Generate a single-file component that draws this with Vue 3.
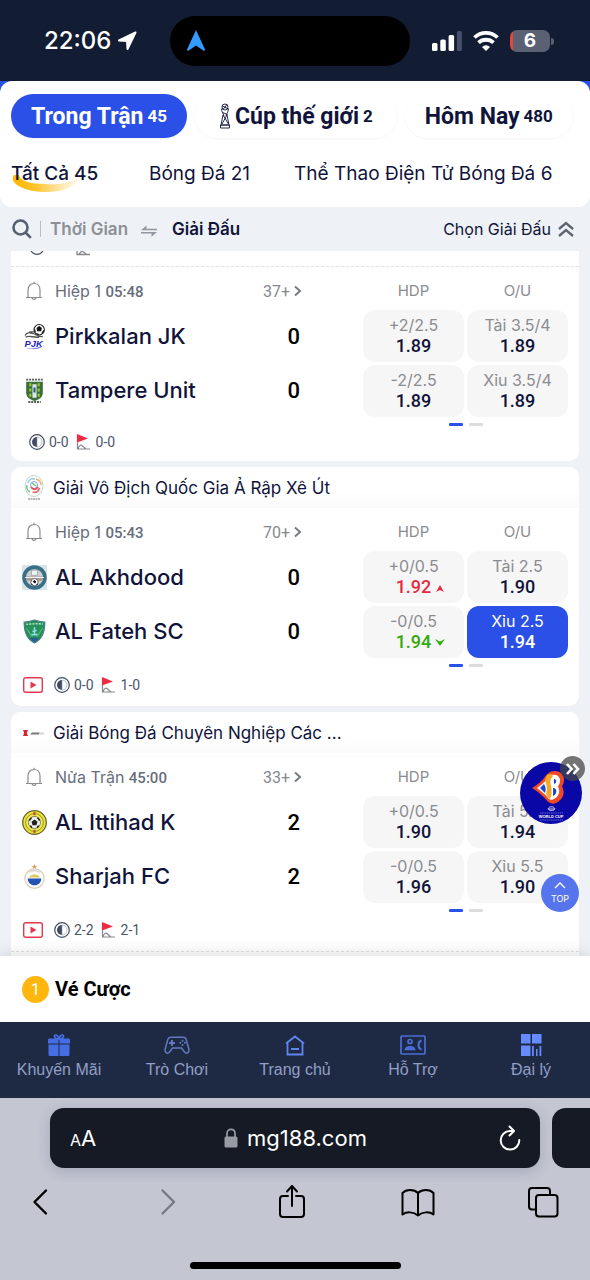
<script setup>
import { ref } from 'vue'

const dayTabs = [
  { label: 'Trong Trận', count: 45 },
  { label: 'Cúp thế giới', count: 2, cup: true },
  { label: 'Hôm Nay', count: 480 },
]
const activeDay = ref(0)

const sports = ['Tất Cả 45', 'Bóng Đá 21', 'Thể Thao Điện Tử Bóng Đá 6']
const activeSport = ref(0)

const picked = ref('1-3')

const cards = [
  {
    carry: true,
    period: 'Hiệp 1', clock: '05:48', more: '37+',
    teams: [
      { name: 'Pirkkalan JK', score: 0, logo: 'pjk' },
      { name: 'Tampere Unit', score: 0, logo: 'tampere' },
    ],
    odds: [
      { line: '+2/2.5', price: '1.89' },
      { line: 'Tài 3.5/4', price: '1.89' },
      { line: '-2/2.5', price: '1.89' },
      { line: 'Xỉu 3.5/4', price: '1.89' },
    ],
    half: '0-0', corners: '0-0',
  },
  {
    league: 'Giải Vô Địch Quốc Gia Ả Rập Xê Út', leagueLogo: 'saudi',
    period: 'Hiệp 1', clock: '05:43', more: '70+', video: true,
    teams: [
      { name: 'AL Akhdood', score: 0, logo: 'akhdood' },
      { name: 'AL Fateh SC', score: 0, logo: 'fateh' },
    ],
    odds: [
      { line: '+0/0.5', price: '1.92', move: 'up' },
      { line: 'Tài 2.5', price: '1.90' },
      { line: '-0/0.5', price: '1.94', move: 'down' },
      { line: 'Xỉu 2.5', price: '1.94' },
    ],
    half: '0-0', corners: '1-0',
  },
  {
    league: 'Giải Bóng Đá Chuyên Nghiệp Các ...', leagueLogo: 'adnoc',
    period: 'Nửa Trận', clock: '45:00', more: '33+', video: true, hasNext: true,
    teams: [
      { name: 'AL Ittihad K', score: 2, logo: 'ittihad' },
      { name: 'Sharjah FC', score: 2, logo: 'sharjah' },
    ],
    odds: [
      { line: '+0/0.5', price: '1.90' },
      { line: 'Tài 5.5', price: '1.94' },
      { line: '-0/0.5', price: '1.96' },
      { line: 'Xỉu 5.5', price: '1.90' },
    ],
    half: '2-2', corners: '2-1',
  },
]

const nav = [
  { label: 'Khuyến Mãi', icon: 'gift' },
  { label: 'Trò Chơi', icon: 'pad' },
  { label: 'Trang chủ', icon: 'home' },
  { label: 'Hỗ Trợ', icon: 'support' },
  { label: 'Đại lý', icon: 'agent' },
]
</script>

<template>
  <div class="screen">
    <header class="status">
      <div class="clock">
        <span>22:06</span>
        <svg width="20" height="20" viewBox="0 0 20 20"><path d="M18.500 1.500 2 9.500l8 .5.500 8Z" fill="#fff" stroke="#fff" stroke-width="2" stroke-linejoin="round" /></svg>
      </div>
      <div class="island">
        <svg width="18" height="22" viewBox="0 0 18 22"><path d="M9 0 18 19.500c.4 1-.6 1.700-1.400 1.200L9 15.500 1.400 20.700C.6 21.200-.4 20.500 0 19.500Z" fill="#339bff" /></svg>
      </div>
      <div class="signals">
        <svg width="30" height="22" viewBox="0 0 30 22">
          <rect x="0" y="13" width="5.500" height="8" rx="1.500" fill="#fff" />
          <rect x="8.300" y="9.500" width="5.500" height="11.500" rx="1.500" fill="#fff" />
          <rect x="16.600" y="5" width="5.500" height="16" rx="1.500" fill="#fff" />
          <rect x="24.900" y="1" width="5" height="20" rx="1.500" fill="#46506a" />
        </svg>
        <svg width="26" height="22" viewBox="0 0 26 22" fill="none" stroke="#fff" stroke-width="3.800">
          <path d="M1.500 7.500a16.500 16.500 0 0 1 23 0" />
          <path d="M5.500 12.700a11 11 0 0 1 15 0" />
          <path d="M13 21 9 17a5.600 5.600 0 0 1 8 0Z" fill="#fff" stroke="none" />
        </svg>
        <div class="battery">6</div>
      </div>
    </header>

    <div class="top-wrap">
      <section class="top-panel">
        <nav class="days">
          <button
            v-for="(t, i) in dayTabs"
            :key="t.label"
            type="button"
            :class="['day', { active: activeDay === i, special: t.cup }]"
            @click="activeDay = i"
          >
            <svg v-if="t.cup" class="cup" width="12" height="26" viewBox="0 0 12 26" fill="none" stroke="#10143a" stroke-width=".9">
              <circle cx="6" cy="4" r="3" /><path d="M3 2.500 9 6M8 1.500 4 6.500" />
              <path d="M2.500 5.500c0 3 1.500 4.500 2.500 7.500M9.500 5.500c0 3-1.500 4.500-2.500 7.500M3.500 9.500l5 2M4 12l-2 10h8L8 12M4 12l5.500 9M8 12 3 21" />
              <path d="M1.500 22h9v3h-9Z" />
            </svg>
            <span class="day-label">{{ t.label }}</span>
            <span class="day-count">{{ t.count }}</span>
          </button>
        </nav>
        <nav class="sports">
          <button
            v-for="(s, i) in sports"
            :key="s"
            type="button"
            :class="['sport', { active: activeSport === i }]"
            @click="activeSport = i"
          >
            <svg v-if="activeSport === i" class="swoosh" width="68" height="17" viewBox="0 0 68 17">
              <defs><linearGradient id="swooshFill"><stop offset="0" stop-color="#ffb800" /><stop offset=".35" stop-color="#ffc42e" /><stop offset="1" stop-color="#fff3d0" stop-opacity=".5" /></linearGradient></defs>
              <path d="M2 0C-4 8 12 17 34 17 52 17 64 11 68 2 58 8 46 10 34 9 18 9 8 6 7 0Z" fill="url(#swooshFill)" />
            </svg>
            <span>{{ s }}</span>
          </button>
        </nav>
      </section>
    </div>

    <section class="filters">
      <button type="button" class="plain" aria-label="Tìm kiếm">
        <svg width="20" height="20" viewBox="0 0 20 20" fill="none" stroke="#565f73" stroke-width="2.600"><circle cx="8.500" cy="8.500" r="7" /><path d="m13.500 13.500 5.300 5.300" /></svg>
      </button>
      <span class="divider"></span>
      <button type="button" class="plain sort muted">Thời Gian</button>
      <svg class="swap" width="18" height="12" viewBox="0 0 18 12" fill="#9497a0"><path d="M17 3.800V5.300H1L6.500.500v3.300ZM1 7h16l-5.500 4.800V8.500H1Z" /></svg>
      <button type="button" class="plain sort">Giải Đấu</button>
      <button type="button" class="plain choose">
        <span>Chọn Giải Đấu</span>
        <svg width="16" height="16" viewBox="0 0 16 16" fill="none" stroke="#5f6570" stroke-width="2.400"><path d="m1 8 7-6 7 6M1 15l7-6 7 6" /></svg>
      </button>
    </section>

    <main class="list">
      <article v-for="(m, ci) in cards" :key="ci" :class="['card', { carry: m.carry }]">
        <div v-if="m.carry" class="previous">
          <svg width="16" height="6" viewBox="0 0 16 6" fill="none" stroke="#4c566c" stroke-width="1.300"><path d="M2 0c3 4.500 9 4.500 12 0" /></svg>
          <svg width="16" height="6" viewBox="0 0 16 6" fill="none" stroke="#85898f" stroke-width="1.300"><path d="M2 0v3.500h13M4 3l3-3 4 3" /></svg>
        </div>
        <h2 v-else class="league">
          <svg v-if="m.leagueLogo === 'saudi'" width="22" height="26" viewBox="0 0 22 26" fill="none">
            <ellipse cx="11" cy="11" rx="9" ry="10.500" stroke="#b9c8bd" stroke-width=".8" />
            <path d="M5 8c1-4 4-5 7-4" stroke="#8fd0ee" stroke-width="1.600" />
            <path d="M13 4c3 1 5 3 5 6" stroke="#f2b36c" stroke-width="1.600" />
            <path d="M4 10c-1 4 1 6 3 7" stroke="#78cc88" stroke-width="1.600" />
            <path d="M16.500 13c-1 4-4 5-7 4" stroke="#e86a74" stroke-width="1.800" />
            <circle cx="11" cy="10" r="3.500" stroke="#7ba2dd" stroke-width="1" /><path d="M8 12c2 3 5 3 7 0" stroke="#e24e5a" stroke-width="1.800" /><path d="m9 8 4 3" stroke="#63bd73" stroke-width="1.200" />
            <path d="M5 24h12" stroke="#777" stroke-width="1.200" stroke-dasharray="2 .5" />
          </svg>
          <svg v-else width="22" height="26" viewBox="0 0 22 26">
            <path d="M0 10h5L3.800 13 5 16H0l1.200-3Z" fill="#d9232e" /><path d="M7 14.500 9 12.500h8l-1 2Z" fill="#77797c" /><path d="M16 12.500h5v2h-5" fill="#d5d6d8" />
          </svg>
          <span>{{ m.league }}</span>
        </h2>

        <div class="match">
          <div class="info">
            <div class="meta">
              <button type="button" class="plain bell" aria-label="Thông báo">
                <svg width="18" height="20" viewBox="0 0 18 20" fill="none" stroke="#8c8c90" stroke-width="1.200"><path d="M1 16.500h16M3 16V9c0-4 2.500-6.500 6-6.500S15 5 15 9v7M9 .700v2M7 17c.5 1.800 3.500 1.800 4 0" /></svg>
              </button>
              <span class="period">{{ m.period }} <b>{{ m.clock }}</b></span>
              <a href="#" class="more">{{ m.more }}
                <svg width="8" height="12" viewBox="0 0 8 12" fill="none" stroke="#777b84" stroke-width="2"><path d="m1 1.500 5 4.500-5 4.500" /></svg>
              </a>
            </div>
            <div v-for="t in m.teams" :key="t.name" class="team">
              <svg v-if="t.logo === 'pjk'" class="crest" viewBox="0 0 24 24">
                <circle cx="16.500" cy="5.500" r="5" fill="#fff" stroke="#222" stroke-width="1" /><path d="m14.500 4 2-1.500 2 1.500-.5 2.500h-3ZM12 5l1 3M21 6l-2 3M14 9l2 1" fill="#111" stroke="#111" />
                <path d="M3 11c1-3 5-3 7-2 4 1 7 4 10 3M3.500 12.500c4-2 8 1 13 0M7 7.500h5" fill="none" stroke="#555" stroke-width="1.300" />
                <text x="2.500" y="22" class="pjk-text">PJK</text>
                <path d="M5 24c5 0 9 0 13-2" fill="none" stroke="#7471e2" />
              </svg>
              <svg v-else-if="t.logo === 'tampere'" class="crest" viewBox="0 0 24 24">
                <path d="M4 1.500h16M6 23h12" stroke="#56645b" stroke-width="1.800" stroke-dasharray="2 .8" />
                <path d="M4 3.500h16V14c0 5-4 7-8 8-4-1-8-3-8-8Z" fill="#39703a" />
                <path d="M8 5v13M16 5v13" stroke="#a9c531" stroke-width="2" stroke-dasharray="3 2" /><path d="M10 6h4v13h-4Z" fill="#d9e8ee" /><path d="M11 9h2v5h-2Z" fill="#31587b" />
              </svg>
              <svg v-else-if="t.logo === 'akhdood'" class="crest" viewBox="0 0 24 24">
                <path d="M0 0h24v24H0Z" fill="#d8e5e8" /><circle cx="12" cy="12" r="10" fill="#cbd1d0" stroke="#396f87" stroke-width="3.500" />
                <path d="M4 11h16v4H4Z" fill="#a99b95" /><path d="M9 5h6v5H9Z" fill="#eef3f3" stroke="#777" stroke-width=".5" /><circle cx="12" cy="16.500" r="3.500" fill="#fff" stroke="#555" stroke-width=".8" /><path d="m11 16 1-1 1 1-.5 1ZM9 18l1 1M15 18l-1 1" fill="#111" stroke="#111" /><path d="M3 12h18" stroke="#f2f2f2" />
              </svg>
              <svg v-else-if="t.logo === 'fateh'" class="crest" viewBox="0 0 24 24">
                <path d="M2 3c4 0 7-1 10-2 3 1 6 2 10 2 0 9-2 16-10 20C4 19 2 12 2 3Z" fill="#27915b" stroke="#4c7e8b" />
                <path d="M4 5c4 0 12-1 16 0" stroke="#a8dfbe" stroke-width="1.500" stroke-dasharray="2 1" fill="none" /><path d="M12 8v6M9 15h6M10 12l4-1" stroke="#91dcf0" stroke-width="1.500" /><path d="M7 18h10l-5 4.500Z" fill="#24618e" /><path d="M4 9c3 2 3 6 6 8M20 9c-3 2-3 6-6 8" stroke="#4fc36c" fill="none" />
              </svg>
              <svg v-else-if="t.logo === 'ittihad'" class="crest" viewBox="0 0 24 24">
                <circle cx="12" cy="12" r="11.300" fill="#eae438" stroke="#66612a" stroke-width="1.200" /><circle cx="12" cy="12" r="8.500" fill="#f3ee4c" stroke="#77712b" stroke-width=".7" />
                <circle cx="12" cy="12" r="5.800" fill="#eee" stroke="#555" stroke-width=".7" /><path d="m12 10 2 1.500-.7 2.500h-2.600L10 11.500ZM7 10l2-2.500M17 10l-2-2.500M8 15l1.500 2M16 15l-1.500 2" fill="#222" stroke="#222" stroke-width="1.500" /><path d="M12 2v3M12 19v3" stroke="#b55332" stroke-width="2" />
              </svg>
              <svg v-else class="crest" viewBox="0 0 24 24">
                <path d="m12 0 .8 1.800h1.800l-1.500 1.200.5 1.700L12 3.800l-1.600.9.500-1.700L9.400 1.800h1.800Z" fill="#e29a55" /><circle cx="12" cy="14" r="9.300" fill="#fbfaf6" stroke="#ddcfb9" stroke-width="1.200" />
                <path d="M5.500 14h13c0 4-3 6.500-6.500 6.500s-6.500-2.500-6.500-6.500Z" fill="#2453b4" /><path d="M7 13c1-4 9-4 10 0Z" fill="#dbca59" /><path d="M7 8c3-2 7-2 10 0" stroke="#d0d4dd" fill="none" />
              </svg>
              <span class="team-name">{{ t.name }}</span>
              <span class="score">{{ t.score }}</span>
            </div>
          </div>

          <div class="market">
            <div class="odds">
              <span class="market-name">HDP</span>
              <span class="market-name">O/U</span>
              <button
                v-for="(o, oi) in m.odds"
                :key="oi"
                type="button"
                :class="['odd', o.move, { picked: picked === ci + '-' + oi }]"
                @click="picked = ci + '-' + oi"
              >
                <span class="line">{{ o.line }}</span>
                <span class="price">{{ o.price }}
                  <svg v-if="o.move" class="arrow" width="10" height="8" viewBox="0 0 10 8"><path :d="o.move === 'up' ? 'M5 1 9 8 5 6 1 8Z' : 'M0 0 5 2.500 10 0 5 7Z'" fill="currentColor" /></svg>
                </span>
              </button>
            </div>
            <div class="pager"><i class="on"></i><i></i></div>
          </div>
        </div>

        <footer :class="['stats', { video: m.video }]">
          <svg v-if="m.video" class="play" width="20" height="16" viewBox="0 0 20 16"><rect x=".7" y=".7" width="18.600" height="14.600" rx="2" fill="none" stroke="#e5384e" stroke-width="1.400" /><path d="m7.500 4.500 6 3.500-6 3.500Z" fill="#e5384e" /></svg>
          <svg width="16" height="16" viewBox="0 0 16 16"><circle cx="8" cy="8" r="7.300" fill="none" stroke="#414c64" stroke-width="1.200" /><path d="M8 3v10A5 5 0 0 1 8 3Z" fill="#414c64" /><path d="M8 3v10a5 5 0 0 0 0-10Z" fill="none" stroke="#8c93a2" stroke-width=".6" /></svg>
          <span class="half">{{ m.half }}</span>
          <svg width="16" height="16" viewBox="0 0 16 16"><path d="M1.500 1v14H14M2 15c1-4 3-4.500 4.500-3 1 1 2 1.500 3.500 3" fill="none" stroke="#85898f" stroke-width="1.200" /><path d="m1 0 11 4.500L1 8.500Z" fill="#ed2b43" /></svg>
          <span>{{ m.corners }}</span>
        </footer>
        <div v-if="m.hasNext" class="next-match"></div>
      </article>

      <div class="promo">
        <a href="#" class="promo-disc" aria-label="World Cup">
          <svg viewBox="0 0 62 62">
            <circle cx="31" cy="31" r="31" fill="#0908a6" />
            <path d="M31 9.500c6-2 13 1 13 8 0 3-1 5-2 7 4 7 0 14-6 16.500-5 2-8-1-10-3.500-4-4-8-8-14-11.500 6-4 10-7 12-10 2-3 4-5 7-6.500Z" fill="#f04a25" />
            <path d="M31 13c5-1 9 1 9 5.500 0 2.500-1 4-2 6 3 6 0 11-5 13-3 1-5-1-7-4-3-3-6-5-9-7.500 4-3 7-5 9-8 1.500-2 3-4 5-5Z" fill="#fff" />
            <path d="M27 13c3-2 5-1 6 1-3 3-3 6-2 10 1 5 1 9-1 13-2-1-3-3-4-5 2-5 0-10-1-14Z" fill="#f4a928" />
            <path d="m24 22-4 4 5 5c1-3 1-6-1-9Z" fill="#174adb" />
            <path d="M34 17c3 0 3 4 0 5ZM33 26c5 0 4 7 0 8Z" fill="#174adb" />
            <path d="M28 47c1-3 6-3 7 0-2 2-5 2-7 0Zm1 0h5" fill="none" stroke="#fff" stroke-width=".8" /><path d="M20 51h23M20 58h23" stroke="#8b91ed" stroke-width=".7" stroke-dasharray="1.500 .7" />
            <text x="31" y="56" text-anchor="middle" class="promo-text">WORLD CUP</text>
          </svg>
        </a>
        <button type="button" class="promo-hide" aria-label="Ẩn">
          <svg width="14" height="12" viewBox="0 0 14 12" fill="none" stroke="#fff" stroke-width="2.600"><path d="m1 1 4.500 5L1 11M7.500 1 12 6l-4.500 5" /></svg>
        </button>
      </div>
      <button type="button" class="to-top">
        <svg width="12" height="7" viewBox="0 0 12 7" fill="none" stroke="#fff" stroke-width="1.300"><path d="m1 6 5-5 5 5" /></svg>
        <span>TOP</span>
      </button>
    </main>

    <button type="button" class="ticket"><span class="ticket-count">1</span><span>Vé Cược</span></button>

    <nav class="tabbar">
      <a v-for="n in nav" :key="n.label" href="#" class="tab">
        <svg v-if="n.icon === 'gift'" width="24" height="22" viewBox="0 0 24 22" fill="#466ee4"><path d="M2 4.500h9.500v5H1v-4Zm10.500 0H22l1 1v4H12.500ZM1.500 10.500h10V22H3c-1 0-1.500-.5-1.500-1.500ZM12.500 10.500h10v10c0 1-.5 1.500-1.500 1.500h-8.500Z" /><path d="M11.500 5C7 5 6.500 1 8.800 1c1.700 0 2.700 2 3.200 4 .5-2 1.500-4 3.200-4C17.500 1 17 5 12.500 5Z" fill="none" stroke="#466ee4" stroke-width="1.700" /></svg>
        <svg v-else-if="n.icon === 'pad'" width="26" height="22" viewBox="0 0 26 22" fill="none" stroke="#6279c2" stroke-width="1.500"><path d="M4 5C4.500 3.500 5.500 3.300 7 3.300h12c1.500 0 2.500.2 3 1.700l2.700 9.500c1 4-2 6-4.200 3.500L17.500 14h-9L5.500 18C3.300 20.500.3 18.500 1.300 14.500Z" /><path d="M8 6v6M5 9h6" stroke-width="2" /><g fill="#6279c2" stroke="none"><circle cx="18.500" cy="6.700" r="1" /><circle cx="18.500" cy="11" r="1" /><circle cx="16.300" cy="8.800" r="1" /><circle cx="20.700" cy="8.800" r="1" /></g></svg>
        <svg v-else-if="n.icon === 'home'" width="20" height="22" viewBox="0 0 20 22" fill="none" stroke="#5f86ef" stroke-width="1.800"><path d="M1 9.500 10 2.500l9 7M2.500 8.500V20.500h15V8.500M6 15h8" /></svg>
        <svg v-else-if="n.icon === 'support'" width="26" height="22" viewBox="0 0 26 22" fill="none" stroke="#4a6dd8" stroke-width="1.700"><rect x="1" y="2" width="24" height="18" rx="1" /><circle cx="10" cy="7.500" r="2" /><path d="M5.500 15.500c1-3.500 8-3.500 9 0Z" fill="#4a6dd8" /><path d="M21.500 6.500c-4 1-4 8 0 9" stroke-width="2" /></svg>
        <svg v-else width="22" height="22" viewBox="0 0 22 22" fill="#668aff"><path d="M1 0h9.500v9.500H1ZM12 0h9.500v9.500H12ZM1 11.500h9.500V22H1ZM12 12h1.800v10H12ZM16 15h1.500v7H16ZM19.500 12h1.800v10h-1.800Z" /></svg>
        <span>{{ n.label }}</span>
      </a>
    </nav>

    <footer class="browser">
      <div class="address-row">
        <div class="address">
          <button type="button" class="plain reader"><small>A</small>A</button>
          <button type="button" class="plain url">
            <svg width="14" height="20" viewBox="0 0 14 20"><path d="M3 9V5.500C3 0 11 0 11 5.500V9" fill="none" stroke="#989aa4" stroke-width="1.700" /><rect x=".5" y="8.500" width="13" height="11" rx="1.500" fill="#989aa4" /></svg>
            <span>mg188.com</span>
          </button>
          <button type="button" class="plain reload" aria-label="Tải lại">
            <svg width="22" height="26" viewBox="0 0 22 26" fill="none" stroke="#fff" stroke-width="2" stroke-linecap="round" stroke-linejoin="round"><path d="M14 6H11A9.300 9.300 0 1 0 20.300 15M10.500 1.500 15 6l-4.500 4.500" /></svg>
          </button>
        </div>
        <div class="next-tab"></div>
      </div>
      <div class="tools">
        <button type="button" class="plain" aria-label="Quay lại"><svg width="34" height="36" viewBox="0 0 34 36" class="ink"><path d="M22 6.500 10.500 18 22 29.500" stroke-width="2.400" /></svg></button>
        <button type="button" class="plain" aria-label="Tiến"><svg width="34" height="36" viewBox="0 0 34 36" class="ink faded"><path d="M12.500 6.500 24 18 12.500 29.500" stroke-width="2.400" /></svg></button>
        <button type="button" class="plain" aria-label="Chia sẻ"><svg width="34" height="36" viewBox="0 0 34 36" class="ink"><path d="M13 12H8c-2 0-3 1-3 3v15c0 2 1 3 3 3h18c2 0 3-1 3-3V15c0-2-1-3-3-3h-5M17 22V2M12 7.500 17 2l5 5.500" /></svg></button>
        <button type="button" class="plain" aria-label="Dấu trang"><svg width="34" height="36" viewBox="0 0 34 36" class="ink"><path d="M17 9C13 5 5 5 1.500 9v21.500c4-3 11-3 15.500 1 4.500-4 11.500-4 15.500-1V9C29 5 21 5 17 9v22.500" /></svg></button>
        <button type="button" class="plain" aria-label="Các tab"><svg width="34" height="36" viewBox="0 0 34 36" class="ink"><path d="M10 25.500H6c-2 0-3-1-3-3V7c0-2 1-3 3-3h15c2 0 3 1 3 3v4" /><rect x="10" y="11" width="21.500" height="21.500" rx="3" /></svg></button>
      </div>
      <div class="home-bar"></div>
    </footer>
  </div>
</template>

<style>
body { background: #c4c6d2; }
</style>

<style scoped>
* { box-sizing: border-box; }
.screen {
  height: 100vh;
  display: flex;
  flex-direction: column;
  font-family: Inter, "Liberation Sans", sans-serif;
  color: #10143a;
  background: #eef1f5;
}
button { font-family: inherit; color: inherit; border: 0; padding: 0; cursor: pointer; }
a { color: inherit; text-decoration: none; }
svg { flex: none; display: block; }
.plain { background: none; display: flex; align-items: center; }

.status {
  display: grid;
  grid-template-columns: 1fr 240px 1fr;
  align-items: center;
  height: 81px;
  padding-right: 10px;
  flex: none;
  background: #121c33;
  color: #fff;
}
.clock { display: flex; align-items: center; gap: 6px; padding-left: 44px; font-size: 24px; font-weight: 500; }
.island { height: 50px; border-radius: 25px; background: #000; display: flex; align-items: center; padding-left: 17px; }
.signals { display: flex; align-items: center; justify-content: flex-end; gap: 11px; padding-right: 30px; }
.battery {
  position: relative;
  width: 40px;
  height: 22px;
  border-radius: 7px;
  background: linear-gradient(90deg, #e8453f 3px, #596172 3px);
  font-size: 19px;
  line-height: 22px;
  font-weight: 700;
  text-align: center;
}
.battery::after { content: ""; position: absolute; right: -4px; top: 8px; width: 3px; height: 7px; border-radius: 0 3px 3px 0; background: #596172; }

.top-wrap { flex: none; background: linear-gradient(#2b50e8 50%, #eef1f5 50%); }
.top-panel { background: #fff; border-radius: 12px; height: 126px; padding: 13px 11px 0; overflow: hidden; }
.days { display: flex; gap: 8px; }
.day {
  display: flex;
  flex: none;
  align-items: center;
  justify-content: center;
  gap: 4px;
  height: 44px;
  padding: 0 20px;
  border-radius: 22px;
  background: #fff;
  box-shadow: 0 1px 2px rgba(20, 30, 60, .05);
  font-family: Roboto, sans-serif;
  font-weight: 700;
  white-space: nowrap;
}
.day.special { padding: 0 24px; }
.day-label { font-size: 23px; }
.day-count { font-size: 17px; }
.day.active { background: #2b50e8; color: #fff; }
.sports { display: flex; gap: 44px; margin-top: 16px; white-space: nowrap; }
.sport { position: relative; background: none; font-size: 19px; line-height: 40px; text-align: left; }
.sport span { position: relative; }
.sport.active { font-weight: 500; min-width: 94px; }
.swoosh { position: absolute; left: 1px; top: 21px; }

.filters { flex: none; display: flex; align-items: center; height: 44px; padding: 0 16px 0 12px; }
.divider { width: 1px; height: 16px; margin: 0 9px 0 8px; background: #b9bdc6; }
.sort { font-size: 17px; font-weight: 600; }
.muted { color: #8c8f96; }
.swap { margin: 3px 14px 0 12px; }
.choose { margin-left: auto; gap: 7px; font-size: 16px; }

.list { position: relative; flex: 1; min-height: 0; overflow: hidden; padding: 0 11px; display: flex; flex-direction: column; gap: 6px; }
.card { flex: none; background: #fff; border-radius: 10px; overflow: hidden; }
.carry { border-radius: 0 0 10px 10px; }
.previous { display: flex; gap: 30px; height: 16px; padding-left: 18px; border-bottom: 1px dashed #dfe1e5; }
.league { display: flex; align-items: center; gap: 8px; height: 41px; margin: 0; padding: 0 12px; background: linear-gradient(#fff 60%, #fafafa); font-size: 17px; font-weight: 400; }

.match { display: grid; grid-template-columns: 290px 1fr; justify-content: space-between; padding: 0 11px; }
.info { padding-top: 10px; }
.meta { display: flex; align-items: center; height: 28px; margin-bottom: 4px; font-size: 16px; color: #676d7c; }
.bell { width: 33px; padding-left: 3px; }
.period b { font-family: Roboto, sans-serif; font-size: 15px; font-weight: 500; }
.more { display: flex; align-items: center; gap: 4px; margin-left: auto; padding-right: 10px; font-family: Roboto, sans-serif; color: #85888f; }
.team { display: flex; align-items: center; height: 54px; padding-right: 12px; }
.crest { width: 25px; height: 25px; margin-right: 8px; }
.team-name { flex: 1; font-size: 22px; font-weight: 500; white-space: nowrap; }
.score { font-family: Roboto, sans-serif; font-size: 22px; font-weight: 500; color: #000; }
.market { width: 205px; justify-self: end; padding-top: 5px; }
.odds { display: grid; grid-template-columns: 1fr 1fr; gap: 3px; }
.market-name { height: 35px; line-height: 38px; text-align: center; font-size: 15px; color: #8b8c90; }
.odd { display: flex; flex-direction: column; align-items: center; justify-content: center; height: 52px; border-radius: 12px; background: #f6f6f6; }
.line { font-size: 16px; line-height: 20px; color: #8b8c90; }
.price { position: relative; font-family: Roboto, sans-serif; font-size: 18px; line-height: 22px; font-weight: 500; }
.arrow { position: absolute; left: 100%; top: 8px; margin-left: 4px; }
.up .price { color: #e62a42; }
.down .price { color: #35a90f; }
.picked { background: #2b50e8; }
.picked .line, .picked .price { color: #fff; }
.pager { display: flex; justify-content: center; gap: 6px; margin-top: 6px; }
.pager i { width: 14px; height: 3px; border-radius: 1px; background: #dcdcdf; }
.pager i.on { background: #2b50e8; }
.stats { display: flex; align-items: center; gap: 4px; height: 35px; padding: 0 18px 4px; font-family: Roboto, sans-serif; font-size: 14px; color: #4c566c; }
.stats.video { height: 39px; padding-left: 12px; }
.play { margin-right: 7px; }
.half { margin-right: 3px; }
.next-match { height: 40px; border-top: 1px dashed #dfe1e5; }
.pjk-text { font: italic 700 9px "Liberation Sans", sans-serif; fill: #251fc4; }

.promo { position: absolute; right: 8px; top: 511px; width: 62px; height: 62px; }
.promo-disc, .promo-disc svg { display: block; width: 62px; height: 62px; }
.promo-text { font: 700 4px "Liberation Sans", sans-serif; fill: #fff; }
.promo-hide { position: absolute; right: -3px; top: -6px; width: 25px; height: 25px; border-radius: 50%; background: rgba(70, 70, 70, .75); display: grid; place-items: center; }
.to-top { position: absolute; right: 11px; bottom: 44px; width: 38px; height: 38px; border-radius: 50%; background: #5675ec; color: #fff; display: flex; flex-direction: column; align-items: center; justify-content: center; gap: 4px; font-size: 9px; line-height: 11px; }

.ticket { position: relative; flex: none; display: flex; align-items: center; gap: 6px; width: 100%; height: 66px; padding-left: 22px; background: #fff; color: #000; box-shadow: 0 -3px 14px rgba(0, 0, 0, .12); font-family: Roboto, sans-serif; font-size: 20px; font-weight: 700; }
.ticket-count { width: 27px; height: 27px; border-radius: 50%; background: #ffb70d; color: #fff; font-size: 17px; line-height: 27px; font-weight: 400; }

.tabbar { position: relative; flex: none; display: grid; grid-template-columns: repeat(5, 1fr); height: 76px; padding-top: 12px; background: #1e2a43; color: #929fc6; font-family: "Liberation Sans", sans-serif; font-size: 16px; }
.tab { display: flex; flex-direction: column; align-items: center; gap: 4px; line-height: 20px; white-space: nowrap; }

.browser { flex: none; background: #c4c6d2; color: #000; }
.address-row { display: flex; gap: 12px; padding: 10px 0 14px 50px; overflow: hidden; }
.address { flex: 1; display: grid; grid-template-columns: 1fr auto 1fr; align-items: center; height: 60px; padding: 0 19px 0 20px; border-radius: 14px; background: #161a24; color: #fff; box-shadow: 0 3px 14px rgba(40, 50, 80, .2); }
.next-tab { width: 38px; height: 60px; border-radius: 14px 0 0 14px; background: #161a24; }
.reader { align-items: baseline; font-size: 22px; }
.reader small { font-size: 16px; }
.url { gap: 9px; font-size: 22px; }
.reload { justify-self: end; }
.tools { display: flex; justify-content: space-between; padding: 2px 30px 0 24px; }
.ink { fill: none; stroke: #000; stroke-width: 2; stroke-linecap: round; stroke-linejoin: round; }
.faded { stroke: #777a84; }
.home-bar { width: 211px; height: 7px; margin: 42px auto 11px; border-radius: 4px; background: #000; }
</style>
